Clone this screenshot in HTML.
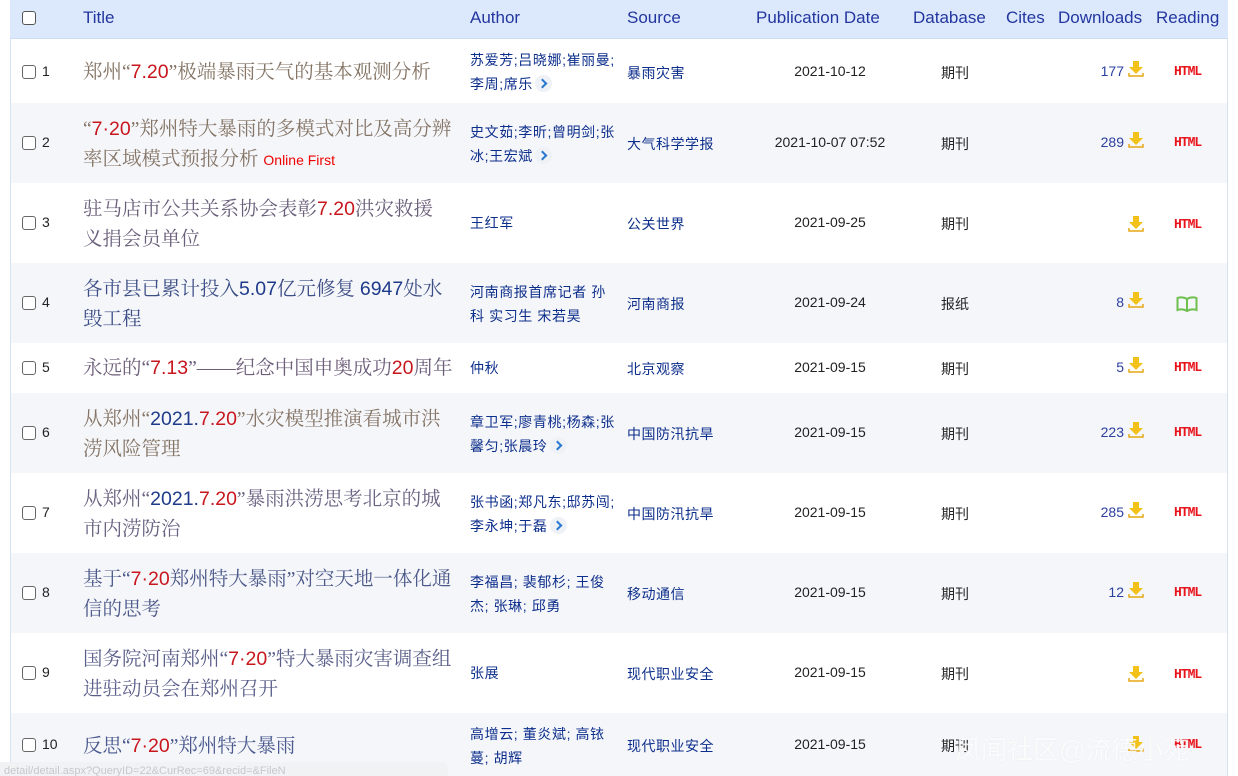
<!DOCTYPE html>
<html><head><meta charset="utf-8">
<style>
*{margin:0;padding:0;box-sizing:border-box}
body{width:1238px;height:776px;overflow:hidden;background:#fff;font-family:"Liberation Sans","Noto Sans CJK SC",sans-serif;position:relative}
.wrap{position:absolute;left:10px;top:0;width:1218px;height:776px;border-left:1px solid #d6e2f2;border-right:1px solid #d6e2f2}
.hdr{position:absolute;left:10px;top:0;width:1218px;height:39px;background:#dce9fc;border-bottom:1px solid #cddcf2}
.hdr span{position:absolute;top:8px;font-size:17px;color:#2336a0}
.row{position:absolute;left:11px;width:1216px}
.alt{background:#f5f6fa}
.cb{position:absolute;left:11px;width:14px;height:14px;border:1.3px solid #666;border-radius:3px;background:#fff}
.num{position:absolute;left:31px;font-size:14px;color:#222}
.tt{position:absolute;left:72px;width:420px;white-space:nowrap;font-family:"Liberation Serif","Noto Serif CJK SC",serif;font-size:19.5px;line-height:30px;color:#857566}
.tt b{font-weight:normal;font-family:"Liberation Sans","Noto Sans CJK SC",sans-serif;color:#c8161d}
.tt i{font-style:normal;font-family:"Liberation Sans","Noto Sans CJK SC",sans-serif;color:#1e3a8a}
.tt .of{font-family:"Liberation Sans",sans-serif;font-size:14px;color:#e00}
.au{position:absolute;left:459px;width:160px;white-space:nowrap;font-size:14px;letter-spacing:0.6px;line-height:24px;color:#0d2f8c}
.more{display:inline-block;width:17px;height:17px;border-radius:50%;background:#eef1f5;vertical-align:-3px;position:relative;margin-left:2px}
.more:after{content:"";position:absolute;left:4px;top:5px;width:5px;height:5px;border-right:2px solid #2877d0;border-top:2px solid #2877d0;transform:rotate(45deg)}
.src{position:absolute;left:616px;font-size:14px;letter-spacing:0.5px;color:#0d2f8c}
.dt{position:absolute;left:744px;width:150px;text-align:center;font-size:14px;color:#222}
.db{position:absolute;left:914px;width:60px;text-align:center;font-size:14px;color:#222}
.dl{position:absolute;left:1040px;width:73px;text-align:right;font-size:14px;color:#2a3fa0}
.ic{position:absolute;left:1117px;width:16px;height:16px}
.html{position:absolute;left:1163px;width:30px;font-family:"Liberation Mono",monospace;font-weight:bold;font-size:13px;color:#e8141b;letter-spacing:-1px;transform:scaleY(1.05)}
.wm{position:absolute;left:955px;top:730px;font-size:26px;color:rgba(255,255,255,0.85);font-family:"Liberation Sans","Noto Sans CJK SC",sans-serif;text-shadow:0 0 1px rgba(0,0,0,0.08)}
.bar{position:absolute;left:0;top:762px;width:448px;height:14px;background:#f1f2f4;border-radius:0 6px 0 0;font-size:11px;color:#c5c8cc;padding-left:4px;line-height:18px;overflow:hidden}
</style></head><body>
<div class="wrap"></div>
<div class="hdr">
<div class="cb" style="left:12px;top:11px;border-color:#555"></div>
<span style="left:73px">Title</span><span style="left:460px">Author</span><span style="left:617px">Source</span><span style="left:746px">Publication Date</span><span style="left:903px">Database</span><span style="left:996px">Cites</span><span style="left:1048px">Downloads</span><span style="left:1146px">Reading</span>
</div>

<svg width="0" height="0" style="position:absolute"><defs><symbol id="d" viewBox="0 0 16 16"><path d="M5 0h6v6h4l-7 7-7-7h4z" fill="#f2c21b"/><path d="M1 12v3h14v-3" fill="none" stroke="#e6a817" stroke-width="1.5"/></symbol></defs></svg>

<div class="row" style="top:40px;height:63px">
<div class="cb" style="top:25px"></div><div class="num" style="top:23px">1</div>
<div class="tt" style="top:17px">郑州“<b>7.20</b>”极端暴雨天气的基本观测分析</div>
<div class="au" style="top:8px">苏爱芳;吕晓娜;崔丽曼;<br>李周;席乐<span class="more"></span></div>
<div class="src" style="top:23px">暴雨灾害</div><div class="dt" style="top:23px">2021-10-12</div><div class="db" style="top:23px">期刊</div>
<div class="dl" style="top:23px">177</div><svg class="ic" style="top:21px"><use href="#d"/></svg><div class="html" style="top:24px">HTML</div>
</div>
<div class="row alt" style="top:103px;height:80px">
<div class="cb" style="top:33px"></div><div class="num" style="top:31px">2</div>
<div class="tt" style="top:11px">“<b>7·20</b>”郑州特大暴雨的多模式对比及高分辨<br>率区域模式预报分析 <span class="of">Online First</span></div>
<div class="au" style="top:17px">史文茹;李昕;曾明剑;张<br>冰;王宏斌<span class="more"></span></div>
<div class="src" style="top:31px">大气科学学报</div><div class="dt" style="top:31px">2021-10-07 07:52</div><div class="db" style="top:31px">期刊</div>
<div class="dl" style="top:31px">289</div><svg class="ic" style="top:29px"><use href="#d"/></svg><div class="html" style="top:32px">HTML</div>
</div>
<div class="row" style="top:183px;height:80px">
<div class="cb" style="top:33px"></div><div class="num" style="top:31px">3</div>
<div class="tt" style="top:11px;color:#6a5f7a">驻马店市公共关系协会表彰<b>7.20</b>洪灾救援<br>义捐会员单位</div>
<div class="au" style="top:28px">王红军</div>
<div class="src" style="top:31px">公关世界</div><div class="dt" style="top:31px">2021-09-25</div><div class="db" style="top:31px">期刊</div>
<svg class="ic" style="top:33px"><use href="#d"/></svg><div class="html" style="top:34px">HTML</div>
</div>
<div class="row alt" style="top:263px;height:80px">
<div class="cb" style="top:33px"></div><div class="num" style="top:31px">4</div>
<div class="tt" style="top:11px;color:#3d4f86">各市县已累计投入<i>5.07</i>亿元修复 <i>6947</i>处水<br>毁工程</div>
<div class="au" style="top:17px">河南商报首席记者 孙<br>科 实习生 宋若昊</div>
<div class="src" style="top:31px">河南商报</div><div class="dt" style="top:31px">2021-09-24</div><div class="db" style="top:31px">报纸</div>
<div class="dl" style="top:31px">8</div><svg class="ic" style="top:29px"><use href="#d"/></svg>
<svg style="position:absolute;left:1165px;top:33px" width="22" height="16" viewBox="0 0 22 16"><path d="M11 3C8 1 4 1 1.5 2v12c2.5-1 6.5-1 9.5 1 3-2 7-2 9.5-1V2C18 1 14 1 11 3v12" fill="none" stroke="#6fbf4f" stroke-width="2"/></svg>
</div>
<div class="row" style="top:343px;height:50px">
<div class="cb" style="top:18px"></div><div class="num" style="top:16px">5</div>
<div class="tt" style="top:10px;color:#6d5e7a">永远的“<b>7.13</b>”——纪念中国申奥成功<b>20</b>周年</div>
<div class="au" style="top:13px">仲秋</div>
<div class="src" style="top:16px">北京观察</div><div class="dt" style="top:16px">2021-09-15</div><div class="db" style="top:16px">期刊</div>
<div class="dl" style="top:16px">5</div><svg class="ic" style="top:14px"><use href="#d"/></svg><div class="html" style="top:17px">HTML</div>
</div>
<div class="row alt" style="top:393px;height:80px">
<div class="cb" style="top:33px"></div><div class="num" style="top:31px">6</div>
<div class="tt" style="top:11px">从郑州“<i>2021.</i><b>7.20</b>”水灾模型推演看城市洪<br>涝风险管理</div>
<div class="au" style="top:17px">章卫军;廖青桃;杨森;张<br>馨匀;张晨玲<span class="more"></span></div>
<div class="src" style="top:31px">中国防汛抗旱</div><div class="dt" style="top:31px">2021-09-15</div><div class="db" style="top:31px">期刊</div>
<div class="dl" style="top:31px">223</div><svg class="ic" style="top:29px"><use href="#d"/></svg><div class="html" style="top:32px">HTML</div>
</div>
<div class="row" style="top:473px;height:80px">
<div class="cb" style="top:33px"></div><div class="num" style="top:31px">7</div>
<div class="tt" style="top:11px;color:#6a6282">从郑州“<i>2021.</i><b>7.20</b>”暴雨洪涝思考北京的城<br>市内涝防治</div>
<div class="au" style="top:17px">张书函;郑凡东;邸苏闯;<br>李永坤;于磊<span class="more"></span></div>
<div class="src" style="top:31px">中国防汛抗旱</div><div class="dt" style="top:31px">2021-09-15</div><div class="db" style="top:31px">期刊</div>
<div class="dl" style="top:31px">285</div><svg class="ic" style="top:29px"><use href="#d"/></svg><div class="html" style="top:32px">HTML</div>
</div>
<div class="row alt" style="top:553px;height:80px">
<div class="cb" style="top:33px"></div><div class="num" style="top:31px">8</div>
<div class="tt" style="top:11px;color:#4d5a8a">基于“<b>7·20</b>郑州特大暴雨”对空天地一体化通<br>信的思考</div>
<div class="au" style="top:17px">李福昌; 裴郁杉; 王俊<br>杰; 张琳; 邱勇</div>
<div class="src" style="top:31px">移动通信</div><div class="dt" style="top:31px">2021-09-15</div><div class="db" style="top:31px">期刊</div>
<div class="dl" style="top:31px">12</div><svg class="ic" style="top:29px"><use href="#d"/></svg><div class="html" style="top:32px">HTML</div>
</div>
<div class="row" style="top:633px;height:80px">
<div class="cb" style="top:33px"></div><div class="num" style="top:31px">9</div>
<div class="tt" style="top:11px;color:#5a5f8a">国务院河南郑州“<b>7·20</b>”特大暴雨灾害调查组<br>进驻动员会在郑州召开</div>
<div class="au" style="top:28px">张展</div>
<div class="src" style="top:31px">现代职业安全</div><div class="dt" style="top:31px">2021-09-15</div><div class="db" style="top:31px">期刊</div>
<svg class="ic" style="top:33px"><use href="#d"/></svg><div class="html" style="top:34px">HTML</div>
</div>
<div class="row alt" style="top:713px;height:63px">
<div class="cb" style="top:25px"></div><div class="num" style="top:23px">10</div>
<div class="tt" style="top:18px;color:#4a5a8e">反思“<b>7·20</b>”郑州特大暴雨</div>
<div class="au" style="top:9px">高增云; 董炎斌; 高铱<br>蔓; 胡辉</div>
<div class="src" style="top:23px">现代职业安全</div><div class="dt" style="top:23px">2021-09-15</div><div class="db" style="top:23px">期刊</div>
<svg class="ic" style="top:23px"><use href="#d"/></svg><div class="html" style="top:24px">HTML</div>
</div>
<div class="bar">detail/detail.aspx?QueryID=22&amp;CurRec=69&amp;recid=&amp;FileN</div>
<div class="wm">凤闻社区@流德小苑</div>
</body></html>
